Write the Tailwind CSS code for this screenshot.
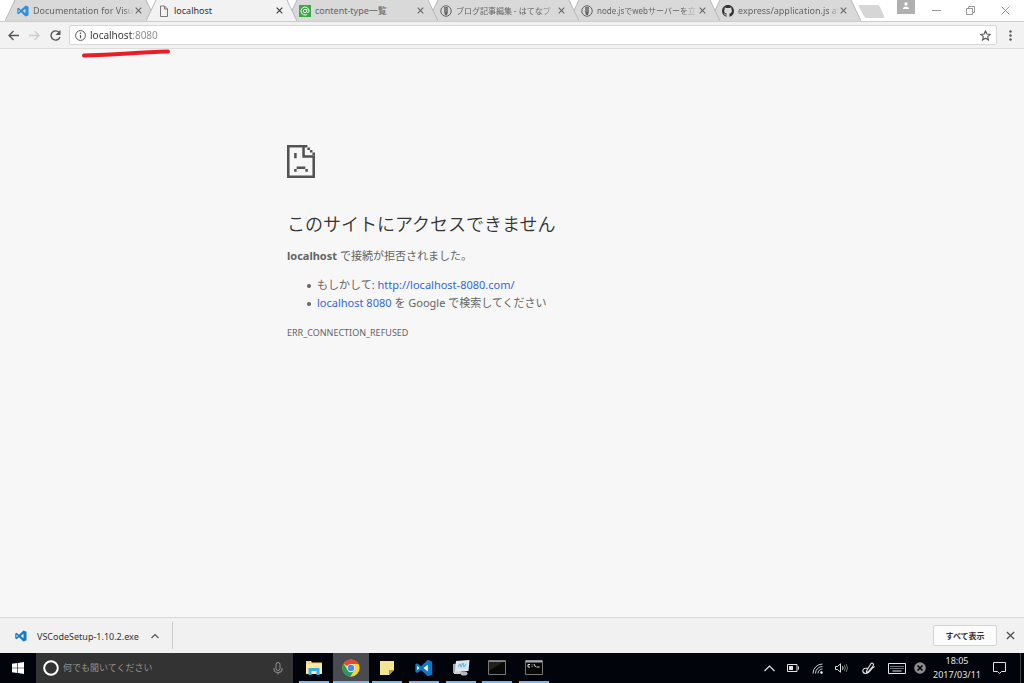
<!DOCTYPE html>
<html lang="ja">
<head>
    <meta charset="UTF-8">
    <meta name="viewport" content="width=device-width, initial-scale=1.0">
    <title>localhost</title>
    <script src="https://cdn.jsdelivr.net/npm/@tailwindcss/browser@4"></script>
</head>
<body class="flex h-screen flex-col overflow-hidden bg-[#f7f7f7] font-['Noto_Sans','Noto_Sans_CJK_JP',sans-serif] text-[#646464]">

    <!-- Shared symbols -->
    <svg class="hidden">
        <symbol id="vscode" viewBox="0 0 24 24">
            <path d="M17 1l6 2.500v17L17 23 8 14.500 3 18.500.5 17V7L3 5.500l5 4zM17 7.500 11.500 12l5.500 4.500zM3 9v6l3-3z" fill="currentColor" fill-rule="evenodd"/>
        </symbol>
        <symbol id="close" viewBox="0 0 10 10">
            <path d="M1 1l8 8M9 1L1 9" fill="none" stroke="currentColor" stroke-width="1.500"/>
        </symbol>
        <symbol id="pen" viewBox="0 0 24 24">
            <circle cx="12" cy="12" r="10.500" fill="none" stroke="currentColor" stroke-width="2"/>
            <path d="M8.500 4h7v11L14 20h-4l-1.500-5z" fill="currentColor"/>
            <path d="M12 5v9" stroke="#d9d9d9" stroke-width="1"/>
        </symbol>
        <symbol id="inactive" viewBox="0 0 151 21" preserveAspectRatio="none">
            <path d="M0 21 10 0H141L151 21z" fill="#d9d9d9"/>
            <path d="M0 21 10 0M141 0 151 21" stroke="#b8b8b8" fill="none"/>
        </symbol>
    </svg>

    <!-- Tab strip -->
    <header class="flex h-[21px] shrink-0 bg-white">
        <div role="tablist" class="isolate flex min-w-0 flex-1 pl-[5px] text-[9px] leading-[21px]">
            <div role="tab" class="relative z-5 -mr-[10px] flex min-w-0 max-w-[151px] flex-1 items-center pr-[14px] pl-[12px]">
                <svg class="absolute inset-0 -z-1 size-full"><use href="#inactive"/></svg>
                <svg class="size-3 shrink-0 text-[#2f8fd8]"><use href="#vscode"/></svg>
                <span class="ml-1 flex-1 overflow-hidden whitespace-nowrap mask-r-from-90%">Documentation for Visu</span>
                <button aria-label="閉じる" class="flex size-2 items-center justify-center"><svg class="size-[7px]"><use href="#close"/></svg></button>
            </div>
            <div role="tab" aria-selected="true" class="relative z-6 -mr-[10px] flex min-w-0 max-w-[151px] flex-1 items-center pr-[14px] pl-[12px] text-[#333]">
                <svg class="absolute inset-0 -z-1 size-full" viewBox="0 0 151 21" preserveAspectRatio="none">
                    <path d="M0 21 10 0H141L151 21z" fill="#f2f2f2"/>
                    <path d="M0 21 10 0M141 0 151 21" stroke="#b8b8b8" fill="none"/>
                </svg>
                <svg class="size-3 shrink-0 text-[#777]" viewBox="0 0 12 12"><path d="M2.500 1h4l3 3v7.500h-7zM6.500 1v3h3" fill="none" stroke="currentColor"/></svg>
                <span class="ml-1 flex-1 overflow-hidden whitespace-nowrap">localhost</span>
                <button aria-label="閉じる" class="flex size-2 items-center justify-center"><svg class="size-[7px]"><use href="#close"/></svg></button>
            </div>
            <div role="tab" class="relative z-4 -mr-[10px] flex min-w-0 max-w-[151px] flex-1 items-center pr-[14px] pl-[12px]">
                <svg class="absolute inset-0 -z-1 size-full"><use href="#inactive"/></svg>
                <svg class="size-3 shrink-0" viewBox="0 0 12 12">
                    <path d="M0 0h12v12H0z" fill="#3aa845"/>
                    <circle cx="6" cy="6" r="1.700" fill="none" stroke="#fff"/>
                    <path d="M7.700 4v2.500c0 1.500 2.300 1.200 2.300-.5a4 4 0 1 0-2 3.500" fill="none" stroke="#fff"/>
                </svg>
                <span class="ml-1 flex-1 overflow-hidden whitespace-nowrap">content-type一覧</span>
                <button aria-label="閉じる" class="flex size-2 items-center justify-center"><svg class="size-[7px]"><use href="#close"/></svg></button>
            </div>
            <div role="tab" class="relative z-3 -mr-[10px] flex min-w-0 max-w-[151px] flex-1 items-center pr-[14px] pl-[12px]">
                <svg class="absolute inset-0 -z-1 size-full"><use href="#inactive"/></svg>
                <svg class="size-3 shrink-0"><use href="#pen"/></svg>
                <span class="ml-1 flex-1 overflow-hidden text-[8px] whitespace-nowrap mask-r-from-85%">ブログ記事編集 - はてなブ</span>
                <button aria-label="閉じる" class="flex size-2 items-center justify-center"><svg class="size-[7px]"><use href="#close"/></svg></button>
            </div>
            <div role="tab" class="relative z-2 -mr-[10px] flex min-w-0 max-w-[151px] flex-1 items-center pr-[14px] pl-[12px]">
                <svg class="absolute inset-0 -z-1 size-full"><use href="#inactive"/></svg>
                <svg class="size-3 shrink-0"><use href="#pen"/></svg>
                <span class="ml-1 flex-1 overflow-hidden text-[8px] whitespace-nowrap mask-r-from-85%">node.jsでwebサーバーを立</span>
                <button aria-label="閉じる" class="flex size-2 items-center justify-center"><svg class="size-[7px]"><use href="#close"/></svg></button>
            </div>
            <div role="tab" class="relative z-1 -mr-[10px] flex min-w-0 max-w-[151px] flex-1 items-center pr-[14px] pl-[12px]">
                <svg class="absolute inset-0 -z-1 size-full"><use href="#inactive"/></svg>
                <svg class="size-3 shrink-0 text-[#333]" viewBox="0 0 16 16"><path fill="currentColor" d="M8 0C3.580 0 0 3.580 0 8c0 3.540 2.290 6.530 5.470 7.590.4.070.55-.17.55-.38v-1.490c-2.010.37-2.530-.49-2.690-.94-.09-.23-.48-.94-.82-1.130-.28-.15-.68-.52-.01-.53.63-.01 1.080.58 1.230.82.72 1.210 1.870.87 2.330.66.07-.52.28-.87.51-1.070-1.780-.2-3.640-.89-3.640-3.950 0-.87.31-1.590.82-2.150-.08-.2-.36-1.020.08-2.120 0 0 .67-.21 2.200.82a7.600 7.600 0 0 1 4 0c1.530-1.040 2.200-.82 2.200-.82.44 1.100.16 1.920.08 2.120.51.56.82 1.270.82 2.150 0 3.070-1.870 3.750-3.650 3.950.29.25.54.73.54 1.480v2.200c0 .21.15.46.55.38A8 8 0 0 0 16 8c0-4.420-3.580-8-8-8z"/></svg>
                <span class="ml-1 flex-1 overflow-hidden whitespace-nowrap mask-r-from-90%">express/application.js at</span>
                <button aria-label="閉じる" class="flex size-2 items-center justify-center"><svg class="size-[7px]"><use href="#close"/></svg></button>
            </div>
            <button aria-label="新しいタブ" class="ml-2 h-[18px] w-[26px] shrink-0">
                <svg class="size-full" viewBox="0 0 26 18"><path d="M1 5h17q2 0 3 2l4 9q1 2-1 2H8q-2 0-3-2L0 7q-1-2 1-2z" fill="#d6d6d6"/></svg>
            </button>
        </div>
        <div class="flex text-[#999]">
            <button aria-label="ユーザー" class="mr-1 flex h-[14px] w-[18px] justify-center bg-[#b0b0b0] text-white">
                <svg class="mt-[2px] size-2" viewBox="0 0 8 8"><circle cx="4" cy="2" r="1.700" fill="currentColor"/><path d="M1 7V6q3-3 6 0v1z" fill="currentColor"/></svg>
            </button>
            <button aria-label="最小化" class="flex w-[34px] items-center justify-center"><svg class="size-[9px]" viewBox="0 0 9 9"><path d="M0 4.500h9" stroke="currentColor"/></svg></button>
            <button aria-label="元に戻す" class="flex w-[34px] items-center justify-center"><svg class="size-[9px]" viewBox="0 0 9 9"><path d="M.5 2.500h6v6h-6zM2.500 2V.5h6v6H7" fill="none" stroke="currentColor"/></svg></button>
            <button aria-label="閉じる" class="flex w-[37px] items-center justify-center"><svg class="size-[9px]" viewBox="0 0 9 9"><path d="M.5.5l8 8M8.500.5l-8 8" stroke="currentColor"/></svg></button>
        </div>
    </header>

    <!-- Toolbar -->
    <nav class="relative flex h-7 shrink-0 items-center border-t border-b border-t-[#ccc] border-b-[#dcdcdc] bg-[#f2f2f2] pl-2 text-[#555]">
        <button aria-label="戻る"><svg class="size-[11px]" viewBox="0 0 11 11"><path d="M11 5.500H1M5.500 1 1 5.500 5.500 10" fill="none" stroke="currentColor" stroke-width="1.300"/></svg></button>
        <button aria-label="進む" class="ml-[10px] text-[#ccc]" disabled><svg class="size-[11px]" viewBox="0 0 11 11"><path d="M0 5.500h10M5.500 1 10 5.500 5.500 10" fill="none" stroke="currentColor" stroke-width="1.300"/></svg></button>
        <button aria-label="再読み込み" class="ml-[10px]"><svg class="size-[11px]" viewBox="0 0 11 11"><path d="M9 2.300A4.600 4.600 0 1 0 10 7" fill="none" stroke="currentColor" stroke-width="1.400"/><path d="M10.500 0v5h-5z" fill="currentColor"/></svg></button>
        <div class="ml-2 flex h-5 flex-1 items-center rounded-xs border border-[#d8d8d8] bg-white px-[5px]">
            <svg class="size-[11px] shrink-0" viewBox="0 0 11 11"><circle cx="5.500" cy="5.500" r="4.900" fill="none" stroke="currentColor"/><path d="M5.500 5v3.200M5.500 2.600v1.300" stroke="currentColor" stroke-width="1.200"/></svg>
            <input aria-label="アドレス" value="localhost:8080" class="ml-1 h-4 min-w-0 flex-1 bg-[linear-gradient(to_right,#333_43px,#888_43px)] bg-clip-text text-[10px] text-transparent outline-none">
            <button aria-label="ブックマーク"><svg class="size-[11px]" viewBox="0 0 12 12"><path d="M6 1l1.500 3.400 3.700.4-2.800 2.400.8 3.700L6 9l-3.200 1.900.8-3.700L.8 4.800l3.700-.4z" fill="none" stroke="currentColor" stroke-width="1.200"/></svg></button>
        </div>
        <button aria-label="メニュー" class="ml-2 mr-2"><svg class="size-[11px]" viewBox="0 0 11 11" fill="currentColor"><circle cx="5.500" cy="1.500" r="1.200"/><circle cx="5.500" cy="5.500" r="1.200"/><circle cx="5.500" cy="9.500" r="1.200"/></svg></button>
        <!-- Hand-drawn underline -->
        <svg class="absolute top-[26px] left-[80px] h-[10px] w-[92px] text-[#ea1c24]" viewBox="0 0 92 10"><path d="M4 7.500Q25 7.200 48 5.500T88 3.500" fill="none" stroke="currentColor" stroke-width="4" stroke-linecap="round"/></svg>
    </nav>

    <!-- Error page -->
    <main class="flex-1 overflow-auto">
        <div class="mx-auto w-[450px] pt-24 text-[11px] leading-[18px]">
            <svg class="h-[33px] w-7" viewBox="0 0 11 13" preserveAspectRatio="none" fill="#535353">
                <path d="M0 0h8v1h-1v3h4v9H0zM1 1v11h9V5H6V1z" fill-rule="evenodd"/>
                <path d="M8 1h1v1H8zM9 2h1v1H9zM10 3h1v1h-1zM2.800 3.200h1v2h-1zM3.800 8.500h3.400v1H3.800zM2.800 9.500h1v1h-1zM7.200 9.500h1v1h-1z"/>
            </svg>
            <h1 class="mt-[33px] text-[18px] leading-[27px] font-[350] text-[#333]">このサイトにアクセスできません</h1>
            <p class="mt-[9px]"><strong>localhost</strong> で接続が拒否されました。</p>
            <ul class="mt-[11px] pl-5">
                <li class="before:mr-[6px] before:inline-block before:size-1 before:rounded-full before:bg-[#646464] before:align-middle before:content-['']">もしかして: <a href="http://localhost-8080.com/" class="text-[#3367d6]">http://localhost-8080.com/</a></li>
                <li class="before:mr-[6px] before:inline-block before:size-1 before:rounded-full before:bg-[#646464] before:align-middle before:content-['']"><a href="#" class="text-[#3367d6]">localhost 8080</a> を Google で検索してください</li>
            </ul>
            <p class="mt-3 text-[9px]">ERR_CONNECTION_REFUSED</p>
        </div>
    </main>

    <!-- Downloads -->
    <section class="flex h-9 shrink-0 items-center border-t border-[#d8d8d8] bg-[#f1f1f1] text-[9px] text-[#333]">
        <button class="flex h-[27px] w-[173px] items-center border-r border-[#ccc] pl-[15px]">
            <svg class="size-3 text-[#0f7acb]"><use href="#vscode"/></svg>
            <span class="ml-[10px] pt-[3px]">VSCodeSetup-1.10.2.exe</span>
            <svg class="ml-3 size-2 text-[#555]" viewBox="0 0 8 8"><path d="M.5 6 4 2.500 7.500 6" fill="none" stroke="currentColor" stroke-width="1.200"/></svg>
        </button>
        <button class="ml-auto h-[21px] w-16 rounded-xs border border-[#d4d4d4] bg-[#fcfcfc] text-[8px] font-semibold">すべて表示</button>
        <button aria-label="閉じる" class="mx-[9px] text-[#555]"><svg class="size-[9px]"><use href="#close"/></svg></button>
    </section>

    <!-- Taskbar -->
    <footer class="flex h-[30px] shrink-0 bg-[#01040a] text-white">
        <button aria-label="スタート" class="flex w-9 items-center justify-center"><svg class="size-3" viewBox="0 0 12 12" fill="currentColor"><path d="M0 1.700 5.400 1v4.700H0zM6 .9 12 0v5.700H6zM0 6.300h5.400V11L0 10.300zM6 6.300h6V12l-6-.9z"/></svg></button>
        <label class="flex w-[257px] items-center bg-[#333] pl-[7px]">
            <svg class="size-4 shrink-0" viewBox="0 0 16 16"><circle cx="8" cy="8" r="6.800" fill="none" stroke="currentColor" stroke-width="2"/></svg>
            <input aria-label="検索" placeholder="何でも聞いてください" class="ml-1 min-w-0 flex-1 text-[9px] outline-none placeholder:text-[#929292]">
            <svg class="mr-[10px] h-[13px] w-[10px] text-[#929292]" viewBox="0 0 10 13" fill="none" stroke="currentColor"><rect x="3" y=".5" width="4" height="8" rx="2"/><path d="M1 6v2q0 2.500 4 2.500T9 8V6M5 10.500v2"/></svg>
        </label>

        <!-- Running apps -->
        <div class="ml-[3px] flex w-[256px]">
            <button aria-label="エクスプローラー" class="flex flex-1 flex-col items-center">
                <svg class="mt-[7px] h-4 w-[18px]" viewBox="0 0 18 16"><path d="M1 1h5l1 1.500h10V14H1z" fill="#f8d775"/><path d="M1 4h16v10H1z" fill="#fde9a3"/><path d="M3.500 8h11v7h-3v-4h-5v4h-3z" fill="#35b0e6"/></svg>
                <span class="mt-auto h-[2px] w-[30px] bg-[#76b9ed]"></span>
            </button>
            <button aria-label="Chrome" class="flex flex-1 flex-col items-center bg-[#484b50]">
                <svg class="mt-[6px] size-[18px]" viewBox="0 0 24 24">
                    <circle cx="12" cy="12" r="11.500" fill="#fdd13c"/>
                    <path d="M12 12 2 6.300A11.500 11.500 0 0 1 22 6.500H12z" fill="#e2483a"/>
                    <path d="M2 6.300A11.500 11.500 0 0 0 11 23.500L16.500 14.500 12 12 7.300 14.700z" fill="#249b58"/>
                    <circle cx="12" cy="12" r="5.500" fill="#f5f5f5"/><circle cx="12" cy="12" r="4.300" fill="#4a86ec"/>
                </svg>
                <span class="mt-auto h-[2px] w-full bg-[#76b9ed]"></span>
            </button>
            <button aria-label="付箋" class="flex flex-1 flex-col items-center">
                <svg class="mt-2 size-[14px]" viewBox="0 0 14 14"><path d="M0 0h14v9l-5 5H0z" fill="#f3e591"/><path d="M14 9H9v5z" fill="#a99a43"/></svg>
                <span class="mt-auto h-[2px] w-[30px] bg-[#76b9ed]"></span>
            </button>
            <button aria-label="Visual Studio Code" class="flex flex-1 flex-col items-center">
                <svg class="mt-[6px] size-[18px]" viewBox="0 0 24 24"><path d="M17 1l6 2.500v17L17 23 8 14.500 3 18.500.5 17V7L3 5.500l5 4z" fill="#1178c4"/><path d="M17 7.500 11.500 12l5.500 4.500zM3 9v6l3-3z" fill="#fff"/></svg>
                <span class="mt-auto h-[2px] w-[30px] bg-[#76b9ed]"></span>
            </button>
            <button aria-label="タスク" class="flex flex-1 flex-col items-center">
                <svg class="mt-[6px] size-[18px]" viewBox="0 0 18 18"><path d="M1 5l8-1v9l-8 1z" fill="#a9abae"/><path d="M4 2l13.500-1-1 11L3 13z" fill="#e4e8eb"/><path d="M6 4l9.500-1-.7 6.500L5.500 10z" fill="#c7e3f3"/><path d="M6 8l2-3 1 3 2-4 1 4 2-3" fill="none" stroke="#5ba3cc" stroke-width=".8"/><path d="M2 13l6-1 3 1-3 2-6 0z" fill="#cfd1d3"/><ellipse cx="12" cy="14.500" rx="3.500" ry="2" fill="#b7b9bb"/></svg>
                <span class="mt-auto h-[2px] w-[30px] bg-[#76b9ed]"></span>
            </button>
            <button aria-label="コンソール" class="flex flex-1 flex-col items-center">
                <svg class="mt-[7px] h-[15px] w-[18px]" viewBox="0 0 18 15"><path d="M.5.5h17v14H.5z" fill="#080808" stroke="#777"/><path d="M1 1.500h16" stroke="#888"/><path d="M1 11 15 2H1z" fill="#202020"/></svg>
                <span class="mt-auto h-[2px] w-[30px] bg-[#76b9ed]"></span>
            </button>
            <button aria-label="コマンド プロンプト" class="flex flex-1 flex-col items-center">
                <svg class="mt-[7px] h-[15px] w-[18px]" viewBox="0 0 18 15"><path d="M.5.5h17v14H.5z" fill="#080808" stroke="#777"/><path d="M1 1.500h16" stroke="#aaa" stroke-width="2"/><path d="M5 4.500H3v2.500h2M7 4.500v.8M7 6.300v.8M9 4l1.500 3M11.500 7h3" fill="none" stroke="#ddd"/></svg>
                <span class="mt-auto h-[2px] w-[30px] bg-[#76b9ed]"></span>
            </button>
        </div>

        <!-- Tray -->
        <div class="ml-auto flex text-[#e4e4e4]">
            <button aria-label="隠れているインジケーター" class="flex w-6 items-center justify-center"><svg class="h-[7px] w-[11px]" viewBox="0 0 11 7"><path d="M.5 6 5.500 1l5 5" fill="none" stroke="currentColor" stroke-width="1.200"/></svg></button>
            <button aria-label="バッテリー" class="flex w-6 items-center justify-center"><svg class="h-2 w-3" viewBox="0 0 12 8"><path d="M.5.5h9.500v7H.5zM11.500 2.500v3" fill="none" stroke="currentColor"/><path d="M2 2h4v4H2z" fill="currentColor"/></svg></button>
            <button aria-label="ネットワーク" class="flex w-6 items-center justify-center"><svg class="size-[11px]" viewBox="0 0 11 11" fill="none" stroke="currentColor" stroke-width=".9"><path d="M1 10.500A9.500 9.500 0 0 1 10.500 1M3.500 10.500a7 7 0 0 1 7-7M6 10.500A4.500 4.500 0 0 1 10.500 6"/><circle cx="9.500" cy="9.500" r="1" fill="currentColor"/></svg></button>
            <button aria-label="音量" class="flex w-6 items-center justify-center"><svg class="h-[10px] w-[13px]" viewBox="0 0 13 10" fill="none" stroke="currentColor"><path d="M.5 3.500h2L5.500.8v8.400L2.500 6.500h-2z"/><path d="M7.500 3.200q1.200 1.800 0 3.600"/><path d="M9.300 2q2 3 0 6M11.200 1q2.500 4 0 8" stroke="#777"/></svg></button>
            <button aria-label="ペン" class="flex w-[30px] items-center justify-center"><svg class="size-[13px]" viewBox="0 0 13 13" fill="none" stroke="currentColor" stroke-width="1.100"><path d="M4.500 9 9 1.500q1-1 2 0t0 2.500L6.500 9.500 4.500 10.500zM6 6Q1 6 .8 8.500T3.500 11.500Q6 12 8 9t4.500-4.500"/></svg></button>
            <button aria-label="タッチ キーボード" class="flex w-7 items-center justify-center"><svg class="h-[11px] w-[18px]" viewBox="0 0 18 11" fill="none" stroke="currentColor"><path d="M.5.5h17v10H.5z"/><path d="M2.500 3.500h13M2.500 5.500h13" stroke-dasharray="1 1"/><path d="M4.500 8h9"/></svg></button>
            <button aria-label="エラー" class="flex w-[18px] items-center justify-center"><svg class="size-3" viewBox="0 0 12 12"><circle cx="6" cy="6" r="5.800" fill="#8d8d8d"/><path d="M3.500 3.500l5 5M8.500 3.500l-5 5" stroke="#01040a" stroke-width="1.600"/></svg></button>
            <button class="flex w-14 flex-col items-center justify-center text-[9px] leading-[14px]"><span>18:05</span><span>2017/03/11</span></button>
            <button aria-label="アクション センター" class="flex w-7 items-center justify-center"><svg class="h-3 w-[13px]" viewBox="0 0 13 12"><path d="M.5.5h12v9H8.500l-2 2-2-2h-4z" fill="none" stroke="currentColor"/></svg></button>
            <button aria-label="デスクトップの表示" class="mr-[3px] w-2 border-r border-[#444]"></button>
        </div>
    </footer>
</body>
</html>
